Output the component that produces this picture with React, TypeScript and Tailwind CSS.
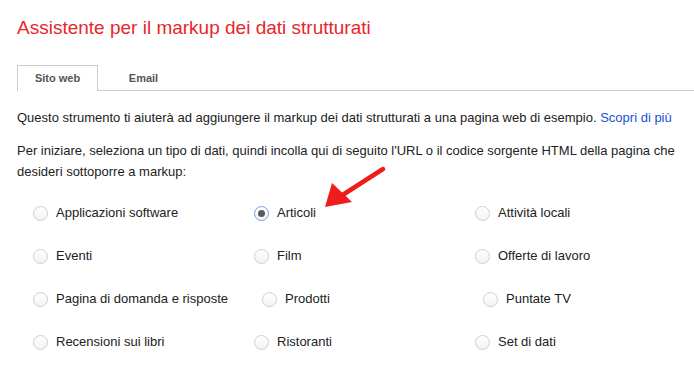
import { useState } from 'react';

const options: { label: string; shift?: boolean }[][] = [
  [{ label: 'Applicazioni software' }, { label: 'Articoli' }, { label: 'Attività locali' }],
  [{ label: 'Eventi' }, { label: 'Film' }, { label: 'Offerte di lavoro' }],
  [{ label: 'Pagina di domanda e risposte' }, { label: 'Prodotti', shift: true }, { label: 'Puntate TV', shift: true }],
  [{ label: 'Recensioni sui libri' }, { label: 'Ristoranti' }, { label: 'Set di dati' }],
];

function Radio({ checked }: { checked: boolean }) {
  return (
    <span
      className={`flex h-[15px] w-[15px] shrink-0 items-center justify-center rounded-full border bg-gradient-to-b from-white to-[#f3f3f3] ${
        checked ? 'border-[#6d9cf2]' : 'border-[#cfcfcf]'
      }`}
    >
      {checked && <span className="h-[7px] w-[7px] rounded-full bg-[#5a5a5a]" />}
    </span>
  );
}

function Arrow() {
  return (
    <svg
      className="pointer-events-none absolute left-[317px] top-[165px]"
      width="72"
      height="50"
      viewBox="0 0 72 50"
    >
      <line x1="66" y1="4" x2="24" y2="31" stroke="#ee1c1c" strokeWidth="4.5" strokeLinecap="round" />
      <polygon points="8,42 15,18 35,37" fill="#ee1c1c" />
    </svg>
  );
}

export default function App() {
  const [selected, setSelected] = useState('Articoli');
  const [tab, setTab] = useState('web');

  return (
    <div className="relative min-h-[369px] w-[694px] bg-white px-[17px] pt-4 font-['Liberation_Sans',Arial,sans-serif] text-[#222]">
      <h1 className="text-[19px] leading-6 text-[#e8262b]">Assistente per il markup dei dati strutturati</h1>

      {/* Tabs */}
      <div className="mt-[25px] -mr-[17px] flex border-b border-[#cccccc]">
        <button
          onClick={() => setTab('web')}
          className={`-mb-px flex h-[26px] w-[81px] items-center justify-center border border-b-0 text-[11px] font-bold text-[#555] ${
            tab === 'web' ? 'border-[#cccccc] bg-white' : 'border-transparent'
          }`}
        >
          Sito web
        </button>
        <button
          onClick={() => setTab('email')}
          className={`-mb-px ml-[5px] flex h-[26px] w-[81px] items-center justify-center border border-b-0 text-[11px] font-bold text-[#555] ${
            tab === 'email' ? 'border-[#cccccc] bg-white' : 'border-transparent'
          }`}
        >
          Email
        </button>
      </div>

      <p className="mt-[17px] text-[13px] leading-[19px]">
        Questo strumento ti aiuterà ad aggiungere il markup dei dati strutturati a una pagina web di esempio.{' '}
        <a href="#" className="text-[#1a4fd6]">
          Scopri di più
        </a>
      </p>
      <p className="mt-[13px] text-[13px] leading-[21px]">
        Per iniziare, seleziona un tipo di dati, quindi incolla qui di seguito l'URL o il codice sorgente HTML della
        pagina che desideri sottoporre a markup:
      </p>

      {/* Data types */}
      <div className="mt-[23px] flex flex-col gap-[27px] pl-4">
        {options.map((row, i) => (
          <div key={i} className="grid grid-cols-[221px_221px_1fr]">
            {row.map((opt) => (
              <label
                key={opt.label}
                onClick={() => setSelected(opt.label)}
                className={`flex h-4 cursor-pointer items-center gap-2 text-[13px] ${opt.shift ? 'pl-2' : ''}`}
              >
                <Radio checked={selected === opt.label} />
                <span>{opt.label}</span>
              </label>
            ))}
          </div>
        ))}
      </div>

      <Arrow />
    </div>
  );
}
